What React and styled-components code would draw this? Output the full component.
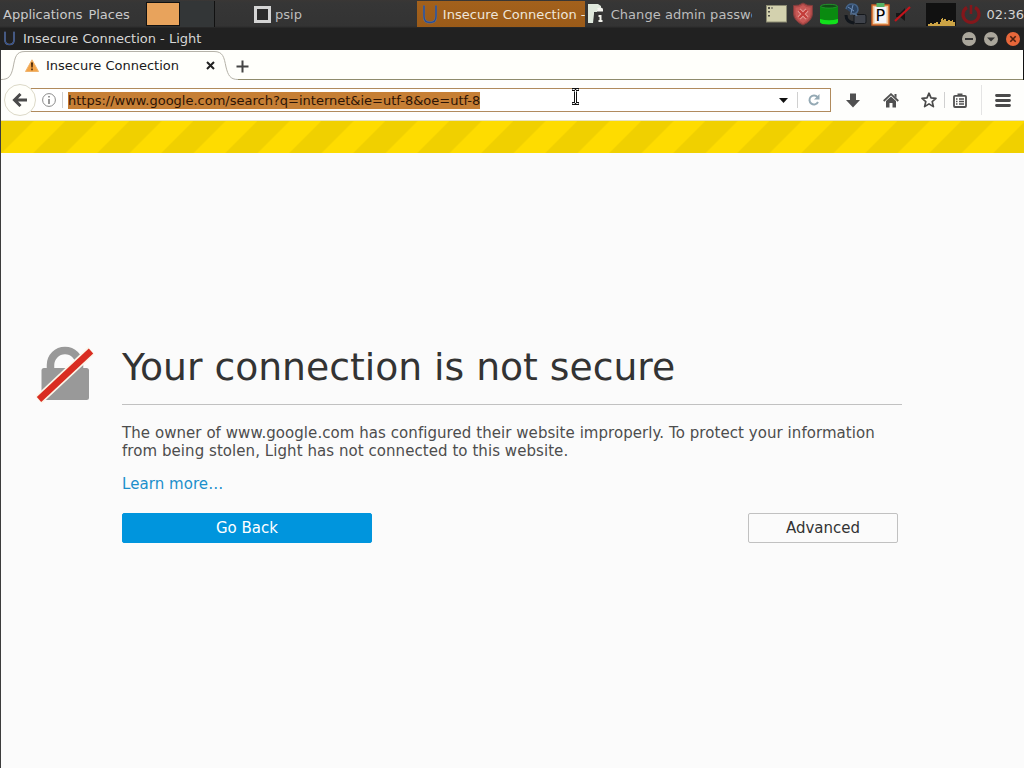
import React from 'react';
import styled, { createGlobalStyle } from 'styled-components';

const GlobalStyle = createGlobalStyle`
  * {
    box-sizing: border-box;
  }
  body {
    margin: 0;
    overflow: hidden;
    font-family: "DejaVu Sans", sans-serif;
  }
  h1, p {
    margin: 0;
    font-weight: normal;
  }
`;

const Screen = styled.div`
  width: 1024px;
  height: 768px;
  display: flex;
  flex-direction: column;
  background: #fbfbfb;
  position: relative;
`;

/* desktop panel */

const Panel = styled.div`
  height: 28px;
  flex: none;
  display: flex;
  align-items: stretch;
  background: linear-gradient(#3a3735 0, #363636 3px, #333 26px, #242424 28px);
  color: #cacaca;
  font-size: 13px;
`;

const Menus = styled.div`
  width: 146px;
  display: flex;
  align-items: center;
  gap: 6px;
  padding-left: 3px;
  white-space: nowrap;
`;

const Workspace = styled.div`
  width: ${(props) => props.$width}px;
  margin: ${(props) => (props.$active ? '2px 0' : '1px 0')};
  border: 1px solid #111;
  border-width: ${(props) => (props.$active ? '1px' : '0 1px 0 0')};
  background: ${(props) => (props.$active ? '#e8a35c' : '#333637')};
`;

const Task = styled.div`
  width: ${(props) => props.$width}px;
  display: flex;
  align-items: center;
  gap: ${(props) => props.$gap}px;
  padding-left: ${(props) => props.$indent}px;
  margin: 1px 0;
  overflow: hidden;
  white-space: nowrap;
  background: ${(props) => (props.$active ? 'linear-gradient(#a3611c, #9b5b19)' : 'transparent')};
  color: ${(props) => (props.$active ? '#efe6da' : '#bdbdbd')};

  svg {
    flex: none;
  }
`;

const TaskLabel = styled.span`
  overflow: hidden;
  letter-spacing: 0.05px;
`;

const Tray = styled.div`
  flex: 1;
  display: flex;
  align-items: center;
  padding-left: 14px;

  svg {
    flex: none;
  }
`;

const Clock = styled.span`
  margin-left: 5px;
  color: #d2d2d2;
`;

/* window */

const TitleBar = styled.div`
  height: 22px;
  flex: none;
  display: flex;
  align-items: center;
  padding: 0 4px 1px 3px;
  background: #212121;
  color: #d6d6d6;
  font-size: 13px;
`;

const WindowTitle = styled.span`
  flex: 1;
  margin-left: 7px;
`;

const WindowButtons = styled.div`
  display: flex;
  gap: 8px;
  padding-top: 1px;
`;

const Browser = styled.div`
  flex: 1;
  display: flex;
  flex-direction: column;
  border-left: 1px solid #3c3c3c;
`;

const TabStrip = styled.div`
  height: 30px;
  flex: none;
  display: flex;
  align-items: center;
  position: relative;
  background: #fffffb;
  border-right: 1px solid #111;
  font-size: 13px;
  color: #1a1a1a;
`;

const TabOutline = styled.svg`
  position: absolute;
  left: 0;
  top: 0;
`;

const Tab = styled.div`
  width: 218px;
  height: 30px;
  display: flex;
  align-items: center;
  padding: 0 4px 0 24px;
  position: relative;
`;

const TabTitle = styled.span`
  flex: 1;
  margin-left: 7px;
`;

const NewTab = styled.div`
  position: relative;
  display: flex;
  margin: 2px 0 0 17px;
`;

const NavBar = styled.div`
  height: 41px;
  flex: none;
  display: flex;
  align-items: center;
  background: #fefefc;
  border-bottom: 1px solid #e9e3bd;
`;

const BackButton = styled.div`
  width: 32px;
  height: 32px;
  margin-left: 3px;
  flex: none;
  display: flex;
  align-items: center;
  justify-content: center;
  border: 1px solid #dcd9c8;
  border-radius: 50%;
  background: #fffffb;
  z-index: 1;
`;

const UrlBar = styled.div`
  width: 800px;
  height: 24px;
  margin-left: -5px;
  flex: none;
  display: flex;
  align-items: center;
  padding-left: 11px;
  border: 1px solid #b08a5c;
  border-left: 0;
  background: #fff;
`;

const Divider = styled.div`
  width: 1px;
  height: ${(props) => props.$height || 16}px;
  background: ${(props) => (props.$height ? '#e4e4e4' : '#d0d0d0')};
`;

const Url = styled.span`
  height: 17px;
  line-height: 17px;
  margin-left: 5px;
  background: #c67f35;
  color: #2d1405;
  font-size: 13px;
  white-space: nowrap;
`;

const UrlActions = styled.div`
  flex: 1;
  display: flex;
  align-items: center;
  justify-content: flex-end;
  padding-right: 10px;
`;

const Tools = styled.div`
  flex: 1;
  display: flex;
  align-items: center;

  svg {
    flex: none;
  }
`;

const Gap = styled.div`
  width: ${(props) => props.$size}px;
  flex: none;
`;

/* error page */

const Stripes = styled.div`
  height: 32px;
  flex: none;
  background: linear-gradient(
      -45deg,
      #f0d000 0%, #f0d000 32%,
      #fedc00 34%, #fedc00 65%,
      #f0d000 67%, #f0d000 100%
    ) 0 0 / 64px 32px repeat-x;
`;

const Page = styled.div`
  flex: 1;
  display: flex;
  align-items: flex-start;
  padding: 192px 0 0 35px;
`;

const Message = styled.div`
  width: 780px;
  margin-left: 28px;
`;

const Heading = styled.h1`
  height: 60px;
  line-height: 44px;
  border-bottom: 1px solid #c1c1c1;
  color: #333;
  font-size: 37.7px;
  white-space: nowrap;
`;

const Description = styled.p`
  margin-top: 19px;
  line-height: 18px;
  color: #4d4d4d;
  font-size: 15px;
  letter-spacing: 0.06px;
  white-space: nowrap;
`;

const LearnMore = styled.a`
  display: block;
  margin-top: 15px;
  line-height: 18px;
  color: #1b8fcb;
  font-size: 15px;
  letter-spacing: 0.06px;
`;

const Actions = styled.div`
  display: flex;
  justify-content: space-between;
  padding-right: 4px;
  margin-top: 20px;
`;

const Button = styled.button`
  width: ${(props) => (props.$primary ? 250 : 150)}px;
  height: 30px;
  padding: 0 0 1px;
  border: 1px solid ${(props) => (props.$primary ? '#0095dd' : '#c1c1c1')};
  border-radius: 2px;
  background: ${(props) => (props.$primary ? '#0095dd' : '#fbfbfb')};
  color: ${(props) => (props.$primary ? '#fff' : '#333')};
  font-family: inherit;
  font-size: 15px;
`;

const Cursor = styled.svg`
  position: absolute;
  left: 571px;
  top: 88px;
`;

const LightLogo = ({ width, height }) => (
  <svg width={width} height={height} viewBox="0 0 16 20" fill="none">
    <path d="M2 1V12Q2 18 8 18Q14 18 14 12V1" stroke="#77777f" strokeWidth="2.200" />
    <path d="M2 1V12Q2 18 8 18Q14 18 14 12V1" stroke="#2c4f94" strokeWidth="1.500" />
  </svg>
);

const TrayIcons = () => (
  <>
    <svg width="22" height="20" viewBox="0 0 22 20">
      <rect x="0.5" y="1.5" width="20" height="16.5" fill="#d3d1ae" stroke="#8b8a72" />
      <path d="M2 3h2v2H2zM2 7h2v1.500H2zM2 11h2v1.500H2zM5 3.500h2v1H5z" fill="#54534a" />
    </svg>
    <Gap $size={4} />
    <svg width="22" height="24" viewBox="0 0 22 24">
      <path d="M11 1Q15 4 20.500 3.500V12Q20 19 11 23Q2 19 1.500 12V3.500Q7 4 11 1Z" fill="#b04a48" stroke="#803c3b" />
      <path d="M11 3Q15 6 18.500 5.500V12Q18 17.500 11 21Q4 17.500 3.500 12V5.500Q7 6 11 3Z" fill="#c85956" />
      <path d="M7 8L15 16M15 8L7 16" stroke="#e8a19b" strokeWidth="4" />
      <path d="M7 8L15 16M15 8L7 16" stroke="#c33c39" strokeWidth="2.400" />
    </svg>
    <Gap $size={5} />
    <svg width="20" height="22" viewBox="0 0 20 22">
      <path d="M1 3V19Q1 21 10 21Q19 21 19 19V3Z" fill="#0a8a10" />
      <path d="M1 16Q10 18.500 19 16V19Q19 21.500 10 21.500Q1 21.500 1 19Z" fill="#12e01c" />
      <ellipse cx="10" cy="3.200" rx="8.500" ry="1.900" fill="#124d17" stroke="#22912a" />
    </svg>
    <Gap $size={5} />
    <svg width="24" height="24" viewBox="0 0 24 24">
      <path d="M2 7Q3 2 8 2Q14 2 14 8Q13 12 9 12" fill="#2c4462" stroke="#456489" strokeWidth="1.500" />
      <path d="M4 5L10 9M9 3L7 11" stroke="#6f8fb8" />
      <path d="M2 13Q2 20 10 21" stroke="#11161c" strokeWidth="3" fill="none" />
      <rect x="10" y="12.500" width="12" height="9" rx="1.500" fill="#3f434b" stroke="#15181c" />
      <path d="M6 12Q12 11 13 14" stroke="#536c8b" strokeWidth="1.500" fill="none" />
    </svg>
    <Gap $size={3} />
    <svg width="19" height="24" viewBox="0 0 19 24">
      <rect x="1" y="3" width="17" height="20" fill="#efc79a" stroke="#cf5f20" strokeWidth="1.400" />
      <rect x="3.500" y="5" width="12" height="16" fill="#f4f4fa" />
      <rect x="5.500" y="1" width="8" height="4" fill="#55b266" />
      <text x="9.300" y="18.500" textAnchor="middle" fontFamily="DejaVu Sans" fontSize="16" fill="#000">P</text>
    </svg>
    <Gap $size={3} />
    <svg width="20" height="20" viewBox="0 0 20 20">
      <path d="M3 9H7L12 4V17L7 13H3Z" fill="#171717" />
      <path d="M2 17L17 3" stroke="#c3141b" strokeWidth="2.200" />
    </svg>
    <Gap $size={13} />
    <svg width="30" height="24" viewBox="0 0 30 24">
      <rect y="1" width="30" height="23" fill="#111" />
      <path d="M2 24V22H4V21H6V22H8V21H10V20H12V22H14V20H15V17H16V16H17V18H18V17H20V19H22V18H24V19H26V18H27V20H29V24Z" fill="#cda445" />
    </svg>
    <Gap $size={4} />
    <svg width="22" height="22" viewBox="0 0 22 22" fill="none">
      <path d="M7 4.500A8 8 0 1 0 15 4.500" stroke="#84171b" strokeWidth="3.200" />
      <path d="M11 2V11" stroke="#84171b" strokeWidth="2.600" />
    </svg>
  </>
);

const WindowButton = ({ color, children }) => (
  <svg width="14" height="14" viewBox="0 0 14 14">
    <circle cx="7" cy="7" r="7" fill={color} />
    {children}
  </svg>
);

const App = () => {
  return (
    <>
      <GlobalStyle />
      <Screen>
        <Panel>
          <Menus>
            <span>Applications</span>
            <span>Places</span>
          </Menus>
          <Workspace $active $width={34} />
          <Workspace $width={35} />
          <Task $width={202} $indent={39} $gap={4}>
            <svg width="17" height="17" viewBox="0 0 17 17">
              <rect x="1.500" y="1.500" width="14" height="14" fill="#2a2a2a" stroke="#d4d4d4" strokeWidth="3" />
            </svg>
            <TaskLabel>psip</TaskLabel>
          </Task>
          <Task $active $width={168} $indent={5} $gap={5}>
            <LightLogo width={16} height={21} />
            <TaskLabel>Insecure Connection -</TaskLabel>
          </Task>
          <Task $width={167} $indent={3} $gap={7}>
            <svg width="16" height="20" viewBox="0 0 16 20">
              <path d="M0 0H10L13 2V5H9V8H6V10L5 19H0Z" fill="#dfe8dc" />
              <path d="M9 5.500Q9 3.500 12 3.500Q15 3.500 15 5.500V7.500H9Z" fill="#f4f4ef" />
              <path d="M10.500 11H13.500V16H14.500V18H10.500V16H11.500V13H10.500Z" fill="#f2f2ec" />
            </svg>
            <TaskLabel>Change admin password</TaskLabel>
          </Task>
          <Tray>
            <TrayIcons />
            <Clock>02:36</Clock>
          </Tray>
        </Panel>

        <TitleBar>
          <LightLogo width={13} height={15} />
          <WindowTitle>Insecure Connection - Light</WindowTitle>
          <WindowButtons>
            <WindowButton color="#aaa69b">
              <path d="M3 7H11" stroke="#333" strokeWidth="2" />
            </WindowButton>
            <WindowButton color="#aaa69b">
              <path d="M3 5.500H11L7 9.500Z" fill="#333" />
            </WindowButton>
            <WindowButton color="#e7673a">
              <path d="M4.300 4.300L9.700 9.700M9.700 4.300L4.300 9.700" stroke="#4c2010" strokeWidth="1.600" />
            </WindowButton>
          </WindowButtons>
        </TitleBar>

        <Browser>
          <TabStrip>
            <TabOutline width="1022" height="30" viewBox="0 0 1022 30" fill="none">
              <path
                d="M0 29.500C8 29.500 10 26 12 18C14 7 15 1.500 24 1.500H213C222 1.500 223 7 225 17C227 25 229 29.500 237 29.500"
                stroke="#b5b2a8"
              />
              <path d="M237 29.500H1022" stroke="#8f8b6c" />
            </TabOutline>
            <Tab>
              <svg width="14" height="13" viewBox="0 0 14 13">
                <path d="M7 0.800L13.500 12.500H0.500Z" fill="#f3a447" stroke="#f0b46c" strokeLinejoin="round" />
                <path d="M6 3.500H8L7.700 8.500H6.300ZM6.200 9.500H7.800V11.200H6.200Z" fill="#47270a" />
              </svg>
              <TabTitle>Insecure Connection</TabTitle>
              <svg width="9" height="9" viewBox="0 0 9 9">
                <path d="M1 1L8 8M8 1L1 8" stroke="#222" strokeWidth="2" />
              </svg>
            </Tab>
            <NewTab>
              <svg width="13" height="13" viewBox="0 0 13 13">
                <path d="M6.500 0.500V12.500M0.500 6.500H12.500" stroke="#444" strokeWidth="2" />
              </svg>
            </NewTab>
          </TabStrip>

          <NavBar>
            <BackButton>
              <svg width="16" height="14" viewBox="0 0 16 14" fill="none" stroke="#4a4a4a" strokeWidth="3">
                <path d="M8.500 1L2.500 7L8.500 13M3 7H15" />
              </svg>
            </BackButton>
            <UrlBar>
              <svg width="14" height="14" viewBox="0 0 14 14" fill="none">
                <circle cx="7" cy="7" r="6.400" stroke="#8a8a8a" />
                <path d="M7 3V4.600M7 6V11" stroke="#777" strokeWidth="1.500" />
              </svg>
              <Gap $size={6} />
              <Divider />
              <Url>https://www.google.com/search?q=internet&amp;ie=utf-8&amp;oe=utf-8</Url>
              <UrlActions>
                <svg width="9" height="5" viewBox="0 0 9 5">
                  <path d="M0 0H9L4.500 5Z" fill="#111" />
                </svg>
                <Gap $size={9} />
                <Divider />
                <Gap $size={10} />
                <svg width="12" height="12" viewBox="0 0 12 12">
                  <path d="M9.500 3.200A4.500 4.500 0 1 0 10 8" stroke="#94a9b4" strokeWidth="2" fill="none" />
                  <path d="M11.500 0V5.500H6Z" fill="#94a9b4" />
                </svg>
              </UrlActions>
            </UrlBar>
            <Tools>
              <Gap $size={15} />
              <svg width="14" height="15" viewBox="0 0 14 15">
                <path d="M4 0.500H10V7H14L7 14.500L0 7H4Z" fill="#505050" />
              </svg>
              <Gap $size={23} />
              <svg width="16" height="15" viewBox="0 0 16 15">
                <path d="M0.700 8L8 1.200L15.300 8" stroke="#505050" strokeWidth="1.800" fill="none" />
                <path d="M11.500 1H13.500V5L11.500 3Z" fill="#505050" />
                <path d="M3 8L8 3.500L13 8V14.500H9.500V10H6.500V14.500H3Z" fill="#505050" />
              </svg>
              <Gap $size={22} />
              <svg width="16" height="16" viewBox="0 0 16 16">
                <path
                  d="M8 1.200L10 5.900L15 6.300L11.200 9.600L12.400 14.600L8 11.900L3.600 14.600L4.800 9.600L1 6.300L6 5.900Z"
                  fill="none"
                  stroke="#4a4a4a"
                  strokeWidth="1.700"
                  strokeLinejoin="round"
                />
              </svg>
              <Gap $size={7} />
              <Divider />
              <Gap $size={8} />
              <svg width="14" height="15" viewBox="0 0 14 15">
                <path d="M4.500 2V0.500H9.500V2Z" fill="#505050" />
                <rect x="1" y="2.800" width="12" height="11.200" rx="1" fill="none" stroke="#505050" strokeWidth="1.800" />
                <path d="M3 6H4.500M6 6H11M3 8.500H4.500M6 8.500H11M3 11H4.500M6 11H11" stroke="#505050" strokeWidth="1.300" />
              </svg>
              <Gap $size={14} />
              <Divider $height={30} />
              <Gap $size={13} />
              <svg width="16" height="13" viewBox="0 0 16 13">
                <path d="M1.500 1.500H14.500M1.500 6.500H14.500M1.500 11.500H14.500" stroke="#4a4a4a" strokeWidth="2.800" strokeLinecap="round" />
              </svg>
            </Tools>
          </NavBar>

          <Stripes />

          <Page>
            <svg width="58" height="58" viewBox="0 0 58 58">
              <path d="M14.500 24V20A14.500 14.500 0 0 1 43.500 20V24" fill="none" stroke="#999" strokeWidth="7.500" />
              <rect x="5.500" y="23" width="47.500" height="32" rx="2.500" fill="#999" />
              <path d="M2.500 55L55.500 5.500" stroke="#fbf6ea" strokeWidth="10" />
              <path d="M3 54.500L55 6" stroke="#d92d21" strokeWidth="6.500" />
            </svg>
            <Message>
              <Heading>Your connection is not secure</Heading>
              <Description>
                The owner of www.google.com has configured their website improperly. To protect your information
                <br />
                from being stolen, Light has not connected to this website.
              </Description>
              <LearnMore>Learn more…</LearnMore>
              <Actions>
                <Button $primary>Go Back</Button>
                <Button>Advanced</Button>
              </Actions>
            </Message>
          </Page>
        </Browser>

        <Cursor width="9" height="17" viewBox="0 0 9 17" fill="none">
          <path d="M1 1.500H3.500L4.500 2.500L5.500 1.500H8M4.500 2V15M1 15.500H3.500L4.500 14.500L5.500 15.500H8" stroke="#111" strokeWidth="3" />
          <path d="M1.500 1.500H3.500L4.500 2.500L5.500 1.500H7.500M4.500 2V15M1.500 15.500H3.500L4.500 14.500L5.500 15.500H7.500" stroke="#fff" />
        </Cursor>
      </Screen>
    </>
  );
};

export default App;
